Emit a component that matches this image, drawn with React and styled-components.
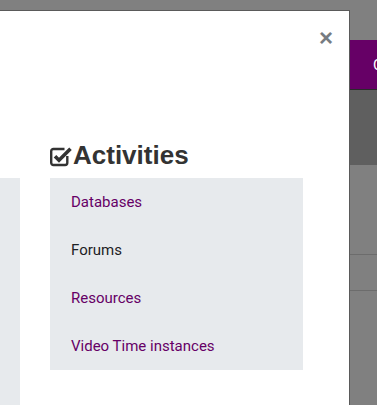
import React from 'react';
import styled, { createGlobalStyle } from 'styled-components';

const GlobalStyle = createGlobalStyle`
  html, body {
    margin: 0;
    padding: 0;
    height: 100%;
    overflow: hidden;
    background: #808080;
  }
  #root {
    height: 100%;
  }
`;

const Page = styled.div`
  display: flex;
  height: 405px;
  width: 377px;
  overflow: hidden;
  font-family: Roboto, 'Liberation Sans', sans-serif;
`;

const Modal = styled.div`
  flex: 0 0 350px;
  box-sizing: border-box;
  margin-top: 10px;
  background: #fff;
  border-top: 1px solid #5a5a5a;
  border-right: 1px solid #5a5a5a;
  display: flex;
  flex-direction: column;
`;

const ModalHeader = styled.div`
  display: flex;
  justify-content: flex-end;
  padding: 14px 16px 0 0;
  height: 100px;
`;

const CloseButton = styled.button`
  border: 0;
  background: none;
  padding: 0;
  width: 14px;
  height: 26px;
  cursor: pointer;
  color: #767c82;
  font-family: 'Liberation Sans', Arial, sans-serif;
  font-size: 24px;
  font-weight: 700;
  line-height: 26px;
`;

const ModalBody = styled.div`
  flex: 1;
  display: grid;
  grid-template-columns: 20px 253px;
  column-gap: 30px;
  padding-top: 15px;
`;

const SidePanel = styled.div`
  background: #e7eaed;
  margin-top: 38px;
`;

const Section = styled.section`
  display: flex;
  flex-direction: column;
`;

const Heading = styled.h3`
  margin: 0 0 7px;
  display: flex;
  align-items: center;
  height: 31px;
  color: #333;
  font-family: 'Liberation Sans', Arial, sans-serif;
  font-size: 26px;
  font-weight: 700;
  svg {
    flex: 0 0 auto;
    margin-right: 1px;
  }
`;

const ItemList = styled.ul`
  list-style: none;
  margin: 0;
  padding: 0;
  background: #e7eaed;
`;

const Item = styled.li`
  height: 48px;
  display: flex;
  align-items: center;
  padding-left: 21px;
  font-size: 15px;
  color: ${p => (p.$plain ? '#1d2125' : '#660066')};
`;

const Side = styled.div`
  flex: 1;
  display: flex;
  flex-direction: column;
`;

const TopGap = styled.div`
  height: 40px;
`;

const NavBar = styled.div`
  height: 49px;
  background: #660066;
  border-bottom: 1px solid #2a2a2a;
  display: flex;
  align-items: center;
  padding-left: 23px;
  color: #fff;
  font-size: 15px;
  white-space: nowrap;
`;

const Banner = styled.div`
  height: 75px;
  background: #5f5f5f;
`;

const Row = styled.div`
  height: ${p => p.$h}px;
  border-bottom: 1px solid #6c6c6c;
`;

const CheckSquare = () => (
  <svg width="22" height="22" viewBox="0 0 22 22">
    <path
      d="M17.3 11 V17.8 A2.2 2.2 0 0 1 15.1 20 H3.4 A2.2 2.2 0 0 1 1.2 17.8 V6.2 A2.2 2.2 0 0 1 3.4 4 H14.5"
      fill="none"
      stroke="#333"
      strokeWidth="2.4"
    />
    <path d="M5 11.2 L9 15.2 L20.5 3.7" fill="none" stroke="#333" strokeWidth="3.6" />
  </svg>
);

const items = [
  { label: 'Databases' },
  { label: 'Forums', plain: true },
  { label: 'Resources' },
  { label: 'Video Time instances' },
];

const App = () => (
  <>
    <GlobalStyle />
    <Page>
      <Modal>
        <ModalHeader>
          <CloseButton aria-label="Close">×</CloseButton>
        </ModalHeader>
        <ModalBody>
          <SidePanel />
          <Section>
            <Heading>
              <CheckSquare />
              Activities
            </Heading>
            <ItemList>
              {items.map(item => (
                <Item key={item.label} $plain={item.plain}>
                  {item.label}
                </Item>
              ))}
            </ItemList>
          </Section>
        </ModalBody>
      </Modal>
      <Side>
        <TopGap />
        <NavBar>Course</NavBar>
        <Banner />
        <Row $h={89} />
        <Row $h={35} />
      </Side>
    </Page>
  </>
);

export default App;
